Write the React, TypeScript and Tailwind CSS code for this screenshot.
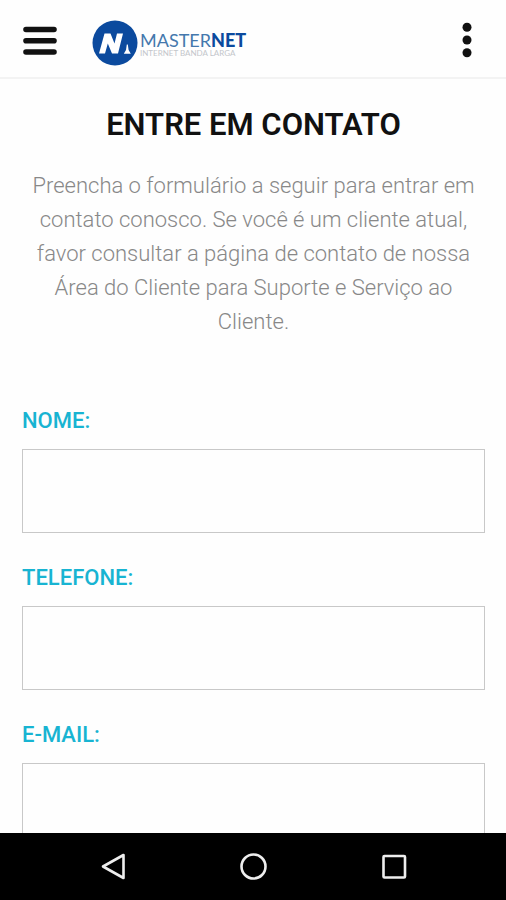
import { useState } from "react";

const fields = [
    { id: "nome", label: "NOME:", type: "text" },
    { id: "telefone", label: "TELEFONE:", type: "tel" },
    { id: "email", label: "E-MAIL:", type: "email" },
];

const Logo = () => (
    <a href="#" className="flex items-center gap-[2px]">
        <svg viewBox="0 0 46 46" className="h-[46px] w-[46px]" aria-hidden="true">
            <circle cx="23" cy="23" r="22.5" fill="#0b4a9e" />
            <path d="M7 33.5 L12.5 13.5 H18.5 L22.5 23.5 L25 13.5 H31 L26 33.5 H20 L15.8 23.5 L13 33.5 Z" fill="#fff" />
            <path d="M34.8 24.5 H35.8 L36.6 30 L38.8 33.8 H31.8 L34 30 Z" fill="#fff" />
        </svg>
        <span className="flex flex-col pt-1 font-['Lato',sans-serif]">
            <span className="text-[18px] leading-[16px] text-[#4478ad]">
                MASTER<b className="font-black text-[#0b4a9e]">NET</b>
            </span>
            <span className="text-[8px] leading-[10px] text-[#c3c6cb]">INTERNET BANDA LARGA</span>
        </span>
    </a>
);

const Header = () => (
    <header className="flex h-[79px] shrink-0 items-center justify-between border-b-2 border-[#f3f3f3] pr-[21px] pl-[22px]">
        <div className="flex items-center gap-[34px] pt-2">
            <button aria-label="Menu" className="flex h-9 w-9 items-center justify-center">
                <svg viewBox="0 0 36 36" className="h-9 w-9 shrink-0" stroke="#111" strokeWidth="5.6" strokeLinecap="round">
                    <path d="M4 4.5H32M4 15.8H32M4 27H32" />
                </svg>
            </button>
            <Logo />
        </div>
        <button aria-label="Mais opções" className="flex h-10 w-9 items-center justify-center">
            <svg viewBox="0 0 36 40" className="h-10 w-9" fill="#111">
                <circle cx="18" cy="8.3" r="4.5" />
                <circle cx="18" cy="21" r="4.5" />
                <circle cx="18" cy="33.7" r="4.5" />
            </svg>
        </button>
    </header>
);

const ContactForm = () => {
    const [values, setValues] = useState<Record<string, string>>({});

    return (
        <form className="flex flex-col gap-[26px]">
            {fields.map(({ id, label, type }) => (
                <div key={id} className="flex flex-col gap-[10px]">
                    <label htmlFor={id} className="text-[22px] leading-[37px] font-medium text-[#18b4d2]">
                        {label}
                    </label>
                    <input
                        id={id}
                        type={type}
                        value={values[id] ?? ""}
                        onChange={e => setValues({ ...values, [id]: e.target.value })}
                        className="h-[84px] w-full border border-[#c8c8c8] px-4 text-[22px] focus:outline-none"
                    />
                </div>
            ))}
        </form>
    );
};

const NavBar = () => (
    <nav className="flex h-[67px] shrink-0 items-center justify-center gap-[105px] bg-black">
        <button aria-label="Voltar" className="h-9 w-9">
            <svg viewBox="0 0 36 36" className="h-9 w-9" fill="none" stroke="#eee" strokeWidth="2.6" strokeLinejoin="round">
                <path d="M9 17.5 L29.5 6 V29 Z" />
            </svg>
        </button>
        <button aria-label="Início" className="h-9 w-9">
            <svg viewBox="0 0 36 36" className="h-9 w-9" fill="none" stroke="#eee" strokeWidth="2.6">
                <circle cx="18.5" cy="17.5" r="12" />
            </svg>
        </button>
        <button aria-label="Recentes" className="h-9 w-9">
            <svg viewBox="0 0 36 36" className="h-9 w-9" fill="none" stroke="#eee" strokeWidth="2.6">
                <rect x="7.5" y="7" width="21.5" height="21.5" rx="1" />
            </svg>
        </button>
    </nav>
);

const App: React.FC = () => {
    return (
        <div className="flex h-screen flex-col bg-[#fefefe] font-['Roboto',sans-serif]">
            <Header />
            <main className="flex-1 overflow-hidden pt-7 pr-[21px] pl-[22px]">
                <h1 className="text-center text-[31px] leading-[36px] font-semibold text-[#111]">ENTRE EM CONTATO</h1>
                <p className="mt-[26px] mb-[63px] text-center text-[22px] leading-[34px] font-light text-[#888]">
                    Preencha o formulário a seguir para entrar em contato conosco. Se você é um cliente atual, favor consultar a página de contato de nossa Área do Cliente para Suporte e Serviço ao Cliente.
                </p>
                <ContactForm />
            </main>
            <NavBar />
        </div>
    );
};

export default App;
